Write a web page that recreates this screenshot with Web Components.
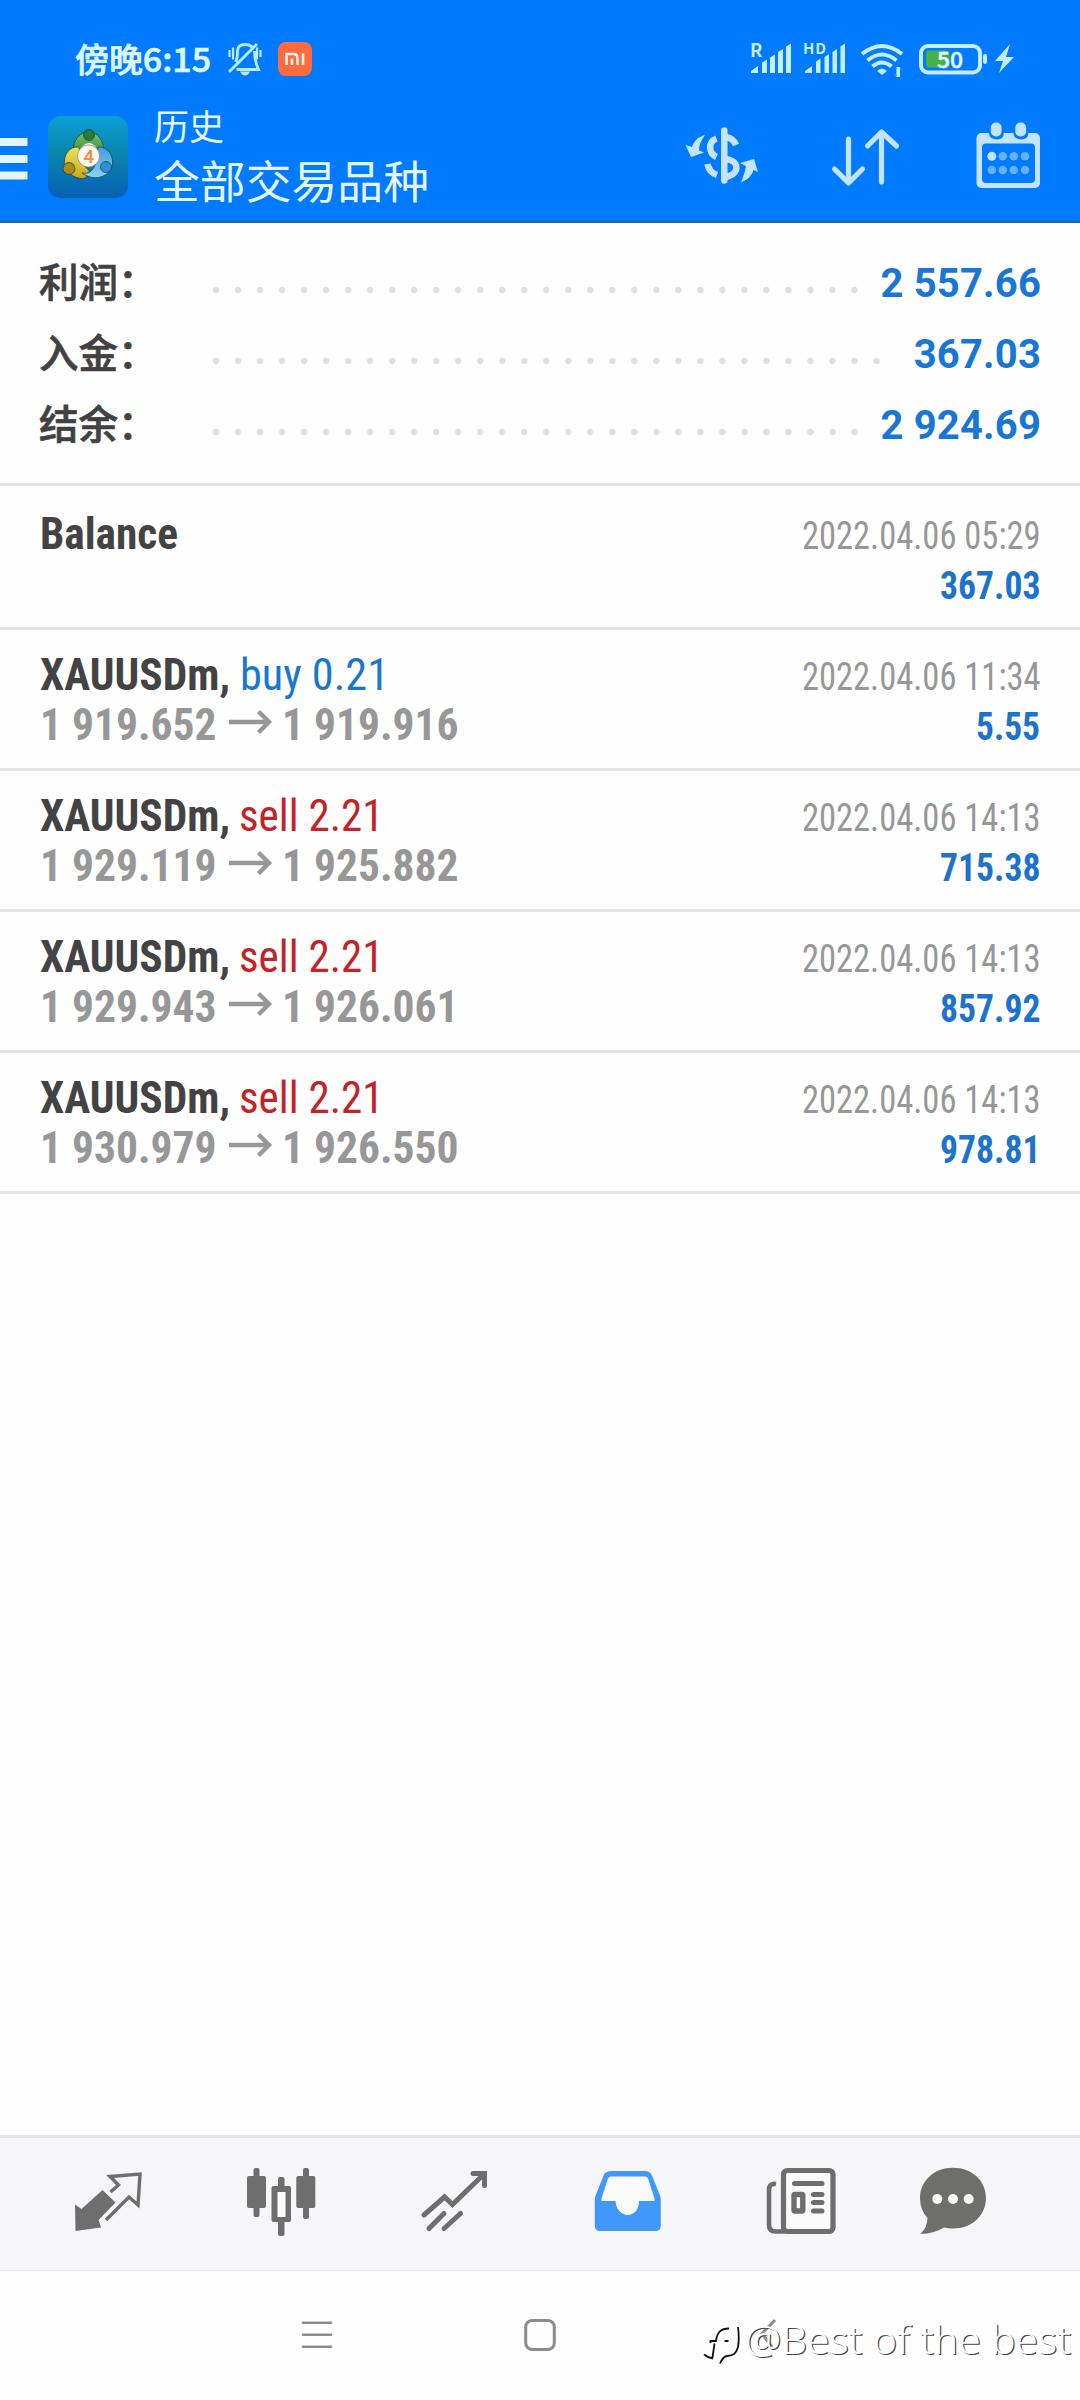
<!DOCTYPE html>
<html lang="zh-CN">
<head>
<meta charset="utf-8">
<title>历史</title>
<style>
html,body{margin:0;padding:0;background:#fefefe}
body{width:1080px;height:2400px;overflow:hidden;font-family:Roboto,"Noto Sans CJK SC",sans-serif}
</style>
</head>
<body>
<history-app></history-app>
<script>
const define = (name, html, setup) => {
  const tpl = document.createElement('template');
  tpl.innerHTML = html;
  customElements.define(name, class extends HTMLElement {
    connectedCallback() {
      if (this.shadowRoot) return;
      const root = this.attachShadow({ mode: 'open' });
      root.append(tpl.content.cloneNode(true));
      if (setup) setup(this, root);
    }
  });
};

/* Condensed text set to an exact advance width */
define('fit-text', `<style>
:host{display:block;white-space:pre;flex:none}
span{display:block;width:max-content;transform-origin:0 50%;font-stretch:75%}
</style><span><slot></slot></span>`, (el, root) => {
  const w = +el.getAttribute('w');
  const s = root.querySelector('span');
  const n = s.getBoundingClientRect().width;
  el.style.width = w + 'px';
  if (n) s.style.transform = 'scaleX(' + (w / n) + ')';
});

define('status-bar', `<style>
:host{display:flex;height:90px;color:#dcf6ff}
.time{font:500 33px/40px "Noto Sans CJK SC",sans-serif;-webkit-text-stroke:.7px #dcf6ff;margin-left:75px;width:153px;box-sizing:border-box;height:90px;padding-top:38px;white-space:nowrap}
svg{display:block;flex:none}
.right{margin-left:auto;margin-right:60px}
text{font-family:"Noto Sans CJK SC",sans-serif}
</style>
<div class="time"><fit-text w="136">傍晚6:15</fit-text></div>
<svg width="90" height="90" viewBox="228 0 90 90">
  <g fill="none" stroke="#b6ecff" stroke-width="2.9">
    <path d="M235.500 62q2-3 2-11c0-5 3-6.500 8-6.500q4 0 6.500 2.500M254.500 51c0 7 .5 11 4 18.500h-22M229 72l28-28"/>
    <path d="M229.500 50v7M233 47.500v12M257 47.500v12M260.500 50v7" stroke-width="2.200"/>
  </g>
  <path d="M240 71.500h10q-2 4-5 4t-5-4z" fill="#b6ecff"/>
  <rect x="278" y="42" width="34" height="34" rx="8" fill="#ff6a3f"/>
  <path d="M286.500 65V54h7q4 0 4 4v7M292 58.500V65M303 53.500V65" fill="none" stroke="#fff3e8" stroke-width="2.600"/>
</svg>
<svg class="right" width="275" height="90" viewBox="745 0 275 90">
  <g fill="#c6ecff">
    <text x="750" y="57" font-size="18" font-weight="700">R</text>
    <text x="803" y="54" font-size="15" font-weight="700" textLength="23">HD</text>
    <path d="M751 73v-2l7-5v7zM762 73V62.500l5-3V73zM770 73V57.500l5-3V73zM778 73V52l5-3V73zM786 73V46.500l5-3V73z"/>
    <path d="M805 73v-2l7-5v7zM816 73V61.500l4.500-3V73zM824.500 73V57l4.500-3V73zM832.500 73V52l4.500-3V73zM840.500 73V46.500l4.500-3V73z"/>
    <path d="M877 71q5-5 10 0l-5 4z"/>
    <path d="M892.500 72l4 4.500V67h2v10h-2zM903.500 72l-3.500-4.500V77h-2V67h2z"/>
    <path d="M1010 44l-15 17h8l-4 12 15-16h-8z"/>
    <rect x="983" y="54" width="4" height="10" rx="2"/>
  </g>
  <g fill="none" stroke="#c6ecff" stroke-width="4">
    <path d="M862 54q20-16 40 0M867.500 60.500q14.500-12 29 0M872.500 66.500q9.500-8 19 0"/>
    <rect x="921" y="46" width="59" height="26.500" rx="7"/>
  </g>
  <rect x="926" y="50.500" width="23.500" height="17" rx="3" fill="#45b148"/>
  <text x="937" y="67.500" font-size="22" font-weight="500" fill="#e4f7ff" stroke="#e4f7ff" stroke-width=".5" textLength="26" lengthAdjust="spacingAndGlyphs">50</text>
</svg>`);

define('app-bar', `<style>
:host{display:flex;height:131px;border-bottom:2px solid #1f66ad;color:#e3f6ff;font-family:"Noto Sans CJK SC",sans-serif}
svg{display:block;flex:none}
.titles{margin-left:24px;width:531px;display:flex;flex-direction:column}
.a{font-size:35px;line-height:40px;height:55px;padding-top:15px;box-sizing:border-box}
.b{font-size:45.500px;line-height:60px;padding-top:4px}
</style>
<svg width="130" height="131" viewBox="0 90 130 131">
  <defs>
    <linearGradient id="bg" x1="0" y1="0" x2="0" y2="1"><stop offset="0" stop-color="#0c9fd6"/><stop offset=".45" stop-color="#0a86ad"/><stop offset="1" stop-color="#0660b4"/></linearGradient>
    <linearGradient id="gr" x1="0" y1="0" x2="0" y2="1"><stop offset="0" stop-color="#7cc06a"/><stop offset="1" stop-color="#2c8436"/></linearGradient>
    <linearGradient id="ye" x1="0" y1="0" x2="0" y2="1"><stop offset="0" stop-color="#efe25a"/><stop offset="1" stop-color="#c9a818"/></linearGradient>
    <linearGradient id="bl" x1="0" y1="0" x2="0" y2="1"><stop offset="0" stop-color="#3c9be0"/><stop offset="1" stop-color="#8fd0f4"/></linearGradient>
  </defs>
  <path d="M0 138h27.500v8H0zM0 155h27.500v8H0zM0 171.500h27.500v8H0z" fill="#e3f6ff"/>
  <rect x="48" y="116" width="80" height="82" rx="13" fill="url(#bg)"/>
  <g stroke="#1c4a4a" stroke-width=".8">
    <path d="M73 153c0-14 7-21 15.500-21S104 139 104 153l-5 5-21-1z" fill="url(#gr)"/>
    <path d="M79 147c-10-1-16 8-14.500 19 4 9 13 14 21 12l4-7-8-8z" fill="url(#ye)"/>
    <path d="M98 147c10-1 17 10 14 20-4 10-18 15-30 6 7 1 10-1 14-10z" fill="url(#bl)"/>
    <path d="M82 147q7-8 14 0l-3 3h-8z" fill="#dff0e0" stroke="none"/>
    <circle cx="89" cy="135" r="5.500" fill="#287b32"/>
    <circle cx="69" cy="168.500" r="6" fill="#a98c15"/>
    <circle cx="106" cy="167" r="5.500" fill="#2e8fd8"/>
    <circle cx="88.500" cy="156" r="11" fill="#fffaf4" stroke="#9d8d74"/>
  </g>
  <text x="83.200" y="163" font-size="19" font-weight="500" fill="#f58a3c" font-family="Roboto">4</text>
</svg>
<div class="titles"><div class="a">历史</div><div class="b"><fit-text w="275">全部交易品种</fit-text></div></div>
<svg width="395" height="131" viewBox="685 90 395 131">
  <g fill="none" stroke="#c3e3ff" stroke-width="6.500">
    <path d="M716.500 138.500C708 142 708 153 716.500 157M707.500 164c1 6 4 9 9.500 11"/>
    <path d="M726 137c5 1 8 3 10 8M725 159c14 1 16 14 1 18"/>
    <path d="M724.300 130.500v50" stroke-linecap="round"/>
  </g>
  <path d="M705 135c-7 2-11 6-13 12l-6.500-2 5.500 12 13-4.500-5-2c0-6 2-10 6-15.500zM741 182.500c7-3 11-7 12.500-12.500l4.500 2-4-13-14 4 6 3c-1 6-3 11-5 16.500z" fill="#c3e3ff"/>
  <g fill="none" stroke="#c3e3ff" stroke-width="5.200" stroke-linecap="round" stroke-linejoin="round">
    <path d="M848.500 139v43M834.500 169l14 14 14-14M881.500 182v-50M867.500 146l14-14 15 14"/>
  </g>
  <rect x="976.500" y="133" width="63.500" height="55" rx="5" fill="#c3e3ff"/>
  <path d="M989 132h14.500q1.500 7-7 7.500-8-.5-7.500-7.500zM1013.500 132h14.500q1.500 7-7 7.500-8-.5-7.500-7.500z" fill="#007aff"/>
  <rect x="990.800" y="122.500" width="10.800" height="14" rx="5" fill="#c3e3ff"/>
  <rect x="1015.300" y="122.500" width="10.800" height="14" rx="5" fill="#c3e3ff"/>
  <rect x="982" y="143.500" width="53" height="39.500" rx="4" fill="#007aff"/>
  <g fill="#66b2ff"><circle cx="1002.800" cy="156.300" r="4.300"/><circle cx="1013.800" cy="156.300" r="4.300"/><circle cx="1025" cy="156.300" r="4.300"/><circle cx="991.800" cy="170" r="4.300"/><circle cx="1002.800" cy="170" r="4.300"/><circle cx="1013.800" cy="170" r="4.300"/><circle cx="1025" cy="170" r="4.300"/></g>
  <circle cx="991.800" cy="156.300" r="4.500" fill="#c3e3ff"/>
</svg>`);

define('summary-row', `<style>
:host{display:flex;height:71px;padding:0 39px 0 39px;line-height:71px}
.l{font:500 39.500px/63px "Noto Sans CJK SC",sans-serif;color:#414141;-webkit-text-stroke:.7px #414141;width:165.500px;white-space:nowrap;flex:none}
.d{height:71px;background:radial-gradient(circle 4px at 11px 42px,#dfdfdf 0 2.600px,transparent 3.800px) 0 0/22.030px 71px repeat-x;flex:none}
.v{margin-left:auto;font:700 40px/71px Roboto,sans-serif;letter-spacing:.15px;color:#1877d6}
</style><div class="l"><slot></slot></div><div class="d"></div><div class="v"></div>`, (el, root) => {
  root.querySelector('.d').style.width = el.getAttribute('dots') * 22.03 + 'px';
  root.querySelector('.v').textContent = el.getAttribute('value');
});

define('deal-row', `<style>
:host{display:flex;justify-content:space-between;box-sizing:border-box;height:141px;padding:20px 40px 0;border-bottom:3px solid #e4e4e4;font:700 45px/50px "Roboto Condensed",Roboto,sans-serif;color:#434343}
:host([first]){height:144px;padding-top:23px}
.line{display:flex;height:50px}
.buy{color:#1877d0;font-weight:400;margin-left:9.500px}
.sell{color:#c42227;font-weight:400;margin-left:9px}
.p{color:#979797}
.p svg{display:block;margin:0 9px 0 11px}
.r{display:flex;flex-direction:column;align-items:flex-end;font-size:38px;padding-top:2px}
.date{font-weight:400;color:#979797;height:50px}
.v{color:#1c73cc;height:50px}
</style><div class="left"></div><div class="r"></div>`, (el, root) => {
  const g = n => el.getAttribute(n), kind = g('kind');
  let left;
  if (!kind) left = `<div class="line"><fit-text w="138">${g('name')}</fit-text></div>`;
  else left = `<div class="line"><fit-text w="190">${g('name')},</fit-text><fit-text class="${kind}" w="${kind === 'buy' ? 149 : 144.5}">${kind} ${g('lot')}</fit-text></div>
    <div class="line p"><fit-text w="176.500">${g('open')}</fit-text><svg width="45" height="50" viewBox="0 0 45 50"><path d="M1 22h41M30.500 11.500L41 22 30.500 32.500" fill="none" stroke="#979797" stroke-width="4.400"/></svg><fit-text w="176.500">${g('close')}</fit-text></div>`;
  root.querySelector('.left').innerHTML = left;
  root.querySelector('.r').innerHTML = `<fit-text class="date" w="238.500">${g('date')}</fit-text><fit-text class="v" w="${g('profit').length > 4 ? 100.5 : 64}">${g('profit')}</fit-text>`;
});

define('tab-bar', `<style>
:host{display:flex;height:132px;background:#f6f6f8;border-top:3px solid #e3e4e6;border-bottom:1px solid #e8e8e9;padding-left:70px}
svg{display:block;flex:none}
.s{fill:none;stroke:#6e6e6e}
</style>
<svg width="172" height="132" viewBox="70 2138 172 132">
  <path d="M102.500 2190l13 12.500-17 17.500 2.500 7.500-25.500 3.500-.5-26.500 6.500 4.500z" fill="#6e6e6e"/>
  <path class="s" stroke-width="3.400" d="M110.500 2192l8-7-8.500-8.500 30-2.500-2 31-9-8-23 23"/>
</svg>
<svg width="173" height="132" viewBox="242 2138 173 132">
  <g fill="#6e6e6e">
    <rect x="247" y="2176" width="19" height="32" rx="2"/><rect x="253.500" y="2168" width="6" height="49" rx="2"/>
    <rect x="296.300" y="2176" width="19" height="32" rx="2"/><rect x="303" y="2168" width="6" height="51" rx="2"/>
    <rect x="278" y="2177" width="6.500" height="59" rx="2"/><rect x="271.500" y="2186" width="19.500" height="36" rx="2"/>
  </g><rect x="277.500" y="2192" width="8" height="25" fill="#fafafb"/>
</svg>
<svg width="173" height="132" viewBox="415 2138 173 132">
  <path class="s" stroke-width="5" stroke-linecap="round" stroke-linejoin="miter" d="M424 2215l20.500-18 8 7.500 31-30M473 2173.500h11.500v12"/>
  <path class="s" stroke-width="5" stroke-linecap="round" d="M429 2228.500l15-15M444 2228.500l16.500-15"/>
</svg>
<svg width="174" height="132" viewBox="588 2138 174 132">
  <path d="M611 2171h34q5 0 7 4.500l8 20q.8 2 .8 5v25q0 5.500-5.500 5.500h-55q-5.500 0-5.500-5.500v-25q0-3 .8-5l8-20q2-4.500 7.400-4.500z" fill="#3f98fa"/>
  <path d="M611 2176.500h34q2 0 3 2l6.500 20v2.500H639c0 19-22.500 18-23.500 0H601.500v-2.500l6.500-20q1-2 3-2z" fill="#fafafa"/>
</svg>
<svg width="154" height="132" viewBox="762 2138 154 132">
  <rect class="s" x="783.500" y="2170.500" width="49.500" height="61" rx="4" stroke-width="5.200" style="fill:#fafafb"/>
  <path class="s" stroke-width="4.600" d="M776 2184q-7-1-7 6v35q0 6.500 7 6.500h9"/>
  <path class="s" stroke-width="5" stroke-linecap="round" d="M794.500 2183.500h27.500M813.500 2194.500h8.500M813.500 2202.500h8.500M813.500 2211h8.500"/>
  <rect class="s" x="794" y="2194.500" width="8.800" height="16.500" rx="1" stroke-width="5.400"/>
</svg>
<svg width="80" height="132" viewBox="916 2138 80 132">
  <path d="M953 2167.700c19 0 33 13 33 30.300s-14 30.500-33 30.500q-5 0-9-1-10 6-23.500 6.500 7-7 7-16-7.500-8-7.500-20c0-17 14-30.300 33-30.300z" fill="#6e6e6c"/>
  <g fill="#fafaf6"><circle cx="937.300" cy="2199" r="5"/><circle cx="953" cy="2199" r="5"/><circle cx="968.700" cy="2199" r="5"/></g>
</svg>`);

define('system-nav', `<style>
:host{display:flex;height:129px;padding-left:297px;position:relative}
svg{display:block;flex:none}
.mark{position:absolute;left:700px;top:38px;display:flex;height:60px;color:#fefefe;font:300 39px/60px "Noto Sans","Open Sans",sans-serif;text-shadow:1.200px 1.200px .6px #444}
.mark svg{margin-right:2.500px}
</style>
<svg width="220" height="129" viewBox="297 2271 220 129"><path d="M303 2322.700h28M303 2334.700h28M303 2346.700h28" stroke="#8c8c8c" stroke-width="2.600" stroke-linecap="round"/></svg>
<svg width="238" height="129" viewBox="517 2271 238 129"><rect x="525.700" y="2320.500" width="28.600" height="29" rx="6.500" fill="none" stroke="#8c8c8c" stroke-width="3"/></svg>
<svg width="30" height="129" viewBox="755 2271 30 129"><path d="M775 2320l-13 13.500 10 13.500" fill="none" stroke="#8c8c8c" stroke-width="3"/></svg>
<div class="mark">
  <svg width="42" height="60" viewBox="700 2309 42 60"><path d="M710.500 2343v-2h5.500c1-9 5-12.500 13-12.500M738 2327q1.500 11 0 20c-1.500 6-4 8.500-11 9-3.500.5-5 3-7 7.500M714.500 2343.500l-2 14M704 2354.500q4 3.500 9 4M724.500 2341h4" fill="none" stroke="#111" stroke-width="1.800"/></svg>
  <fit-text w="326">@Best of the best</fit-text>
</div>`);

define('history-app', `<style>
:host{display:flex;flex-direction:column;width:1080px;height:2400px;background:#fefefe}
header{background:#007aff;flex:none}
.sum{padding:25px 0 22px;border-bottom:3px solid #e4e4e4;flex:none}
main{flex:1}
</style>
<header><status-bar></status-bar><app-bar></app-bar></header>
<div class="sum">
<summary-row dots="30" value="2 557.66">利润：</summary-row>
<summary-row dots="31" value="367.03">入金：</summary-row>
<summary-row dots="30" value="2 924.69">结余：</summary-row>
</div>
<main>
<deal-row first name="Balance" date="2022.04.06 05:29" profit="367.03"></deal-row>
<deal-row name="XAUUSDm" kind="buy" lot="0.21" open="1 919.652" close="1 919.916" date="2022.04.06 11:34" profit="5.55"></deal-row>
<deal-row name="XAUUSDm" kind="sell" lot="2.21" open="1 929.119" close="1 925.882" date="2022.04.06 14:13" profit="715.38"></deal-row>
<deal-row name="XAUUSDm" kind="sell" lot="2.21" open="1 929.943" close="1 926.061" date="2022.04.06 14:13" profit="857.92"></deal-row>
<deal-row name="XAUUSDm" kind="sell" lot="2.21" open="1 930.979" close="1 926.550" date="2022.04.06 14:13" profit="978.81"></deal-row>
</main>
<tab-bar></tab-bar>
<system-nav></system-nav>`);
</script>
</body>
</html>
